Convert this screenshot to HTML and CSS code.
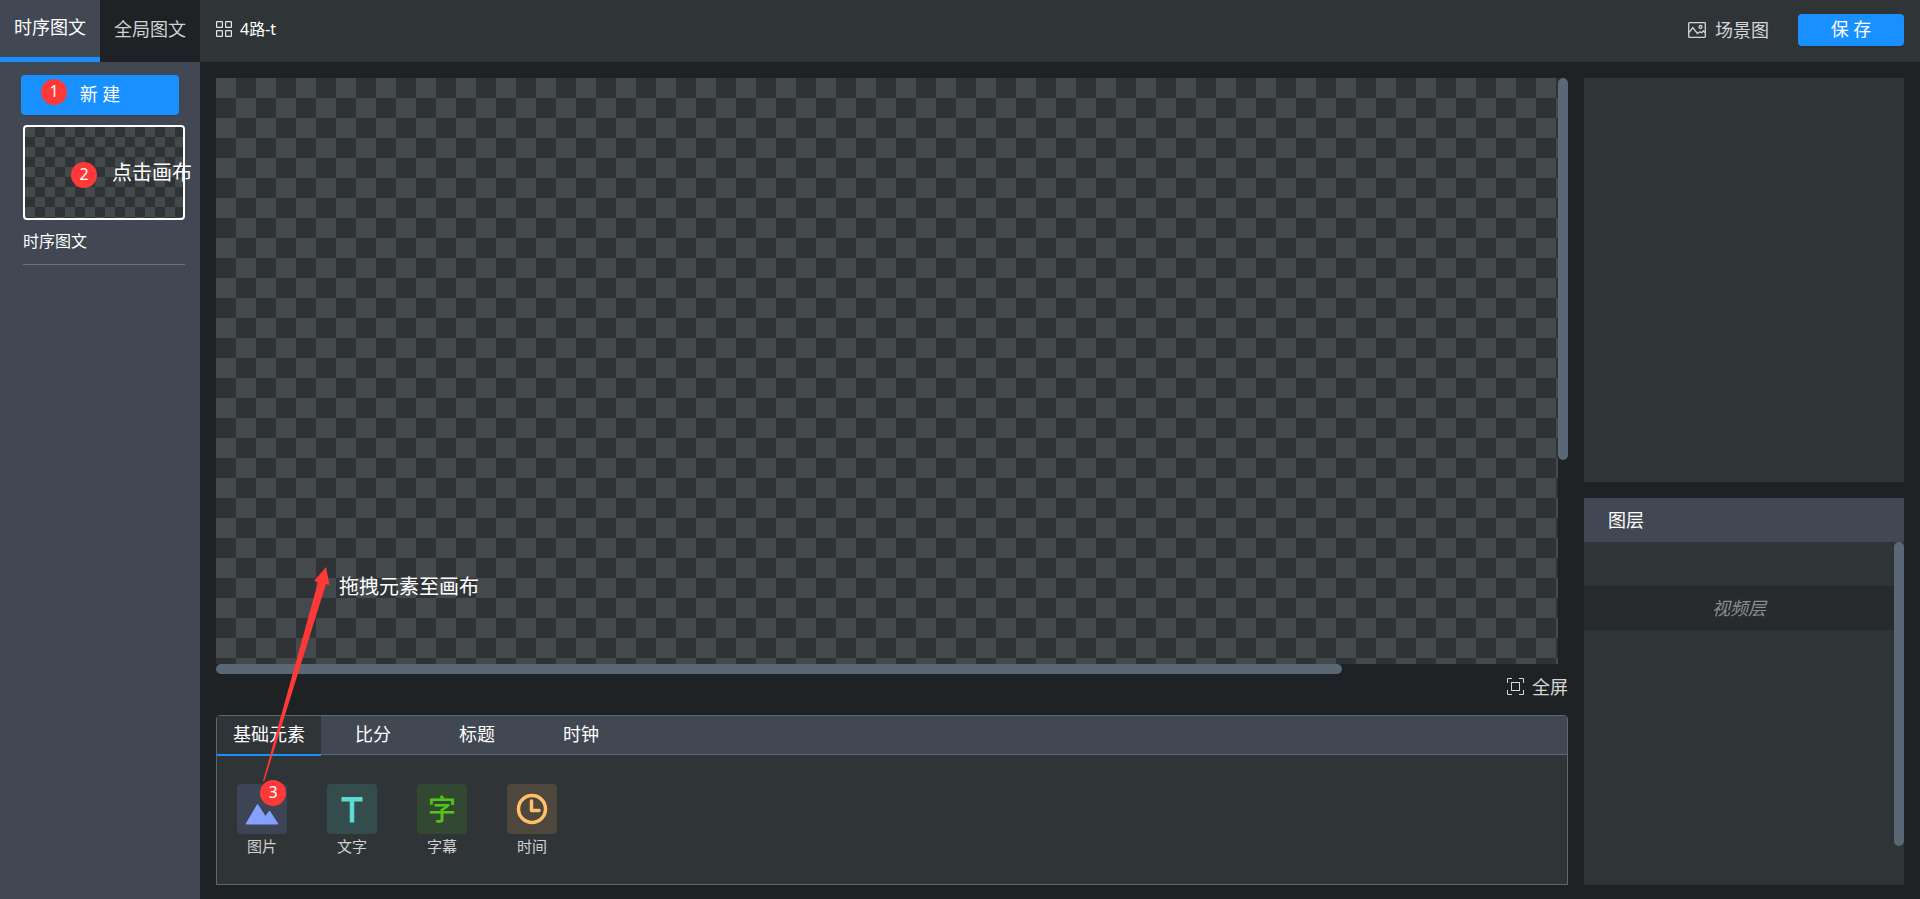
FILE: index.html
```html
<!DOCTYPE html>
<html lang="zh-CN">
<head>
<meta charset="utf-8">
<title>时序图文</title>
<link rel="stylesheet" href="styles.css">
</head>
<body>
<div class="app">
  <header class="header">
    <nav class="modes">
      <button class="mode mode-active" type="button">时序图文</button>
      <button class="mode" type="button">全局图文</button>
    </nav>
    <div class="title">
      <svg class="title-icon" viewBox="0 0 16 16" width="16" height="16" fill="none" stroke="currentColor" stroke-width="1.2">
        <rect x=".6" y=".6" width="5.800" height="5.800" rx=".5"/><rect x="9.600" y=".6" width="5.800" height="5.800" rx=".5"/>
        <rect x=".6" y="9.600" width="5.800" height="5.800" rx=".5"/><rect x="9.600" y="9.600" width="5.800" height="5.800" rx=".5"/>
      </svg>
      <h1 class="title-text">4路-t</h1>
    </div>
    <div class="actions">
      <button class="link-button scene" type="button">
        <svg viewBox="0 0 18 16" width="18" height="16" fill="none" stroke="currentColor" stroke-width="1.3">
          <rect x=".7" y=".7" width="16.6" height="14.6" rx=".5"/>
          <path d="M1 10.5 4.8 5.5 9.5 11.5 12 9.8 13.5 10.8 15.5 9 17 10.5"/>
          <circle cx="12.5" cy="5" r="1.5"/>
        </svg>
        <span>场景图</span>
      </button>
      <button class="primary save" type="button">保 存</button>
    </div>
  </header>

  <aside class="sidebar">
    <button class="primary create" type="button"><span class="badge badge-create">1</span>新 建</button>
    <div class="scene-item">
      <div class="thumb checker checker-small">
        <span class="badge badge-thumb">2</span>
        <span class="hint hint-thumb">点击画布</span>
      </div>
      <div class="scene-name">时序图文</div>
    </div>
  </aside>

  <main class="workspace">
    <div class="viewport">
      <div class="canvas checker"></div>
      <div class="track-y"><div class="thumb-y"></div></div>
      <div class="track-x"><div class="thumb-x"></div></div>
    </div>
    <div class="toolbar">
      <button class="link-button" type="button">
        <svg viewBox="0 0 17 17" width="17" height="17" fill="none" stroke="currentColor" stroke-width="1">
          <path d="M.5 5V.5H5M12 .5h4.500V5M16.500 12v4.500H12M5 16.500H.5V12"/>
          <rect x="4.500" y="4.500" width="8" height="8"/>
        </svg>
        <span>全屏</span>
      </button>
    </div>
    <section class="elements">
      <nav class="tabs">
        <button class="tab tab-active" type="button">基础元素</button>
        <button class="tab" type="button">比分</button>
        <button class="tab" type="button">标题</button>
        <button class="tab" type="button">时钟</button>
      </nav>
      <ul class="items">
        <li class="item">
          <span class="tile tile-image">
            <svg viewBox="0 0 50 50" width="50" height="50"><path d="M9 40 20.500 20.500 28.500 32.500 32.500 27 41 40Z" fill="#85a0ff" stroke="#85a0ff" stroke-width="1" stroke-linejoin="round"/></svg>
            <span class="badge badge-image">3</span>
          </span>
          <span>图片</span>
        </li>
        <li class="item">
          <span class="tile tile-text">
            <svg viewBox="0 0 50 50" width="50" height="50" fill="none" stroke="#5cdbd3"><path d="M14.500 15.300H35.500M25 15V38.500" stroke-width="4.500"/></svg>
          </span>
          <span>文字</span>
        </li>
        <li class="item">
          <span class="tile tile-caption">字</span>
          <span>字幕</span>
        </li>
        <li class="item">
          <span class="tile tile-time">
            <svg viewBox="0 0 50 50" width="50" height="50" fill="none" stroke="#ffc069"><circle cx="25" cy="25" r="13.500" stroke-width="3.500"/><path d="M24.500 17V26.500H32" stroke-width="3.500" stroke-linecap="round" stroke-linejoin="round"/></svg>
          </span>
          <span>时间</span>
        </li>
      </ul>
    </section>
    <div class="guide">
      <svg class="guide-arrow" viewBox="0 0 68 216" width="68" height="216"><path d="M63 0 51 14 55 15.300 0 214 1.200 214.500 63 17 66.500 18Z" fill="#ff3838"/></svg>
      <span class="hint hint-drag">拖拽元素至画布</span>
    </div>
  </main>

  <aside class="inspector">
    <section class="properties"></section>
    <section class="layers">
      <h2 class="layers-title">图层</h2>
      <div class="layers-body">
        <div class="layers-list">
          <div class="layer"></div>
          <div class="layer layer-video">视频层</div>
        </div>
        <div class="layers-track"><div class="layers-thumb"></div></div>
      </div>
    </section>
  </aside>
</div>
</body>
</html>
```
FILE: styles.css
```css
* {
  box-sizing: border-box;
}

body {
  margin: 0;
  background: #1e2224;
  color: #fff;
  font-family: "Noto Sans", "Noto Sans CJK SC", sans-serif;
  font-size: 18px;
  line-height: 24px;
}

button {
  margin: 0;
  padding: 0;
  border: 0;
  background: none;
  color: inherit;
  font: inherit;
  cursor: pointer;
}

svg {
  display: block;
}

.app {
  display: grid;
  grid-template-columns: 200px minmax(0, 1fr) 352px;
  grid-template-rows: 62px minmax(0, 1fr);
  height: 100vh;
}

.header {
  grid-column: 1 / -1;
  display: flex;
  background: #2f3437;
}

.modes {
  display: grid;
  grid-template-columns: 1fr 1fr;
  width: 200px;
}

.mode {
  padding-bottom: 4px;
  background: #1e2224;
  color: #d0d1d1;
}

.mode-active {
  border-bottom: 5px solid #1890ff;
  background: #414853;
  color: #fff;
}

.title {
  display: flex;
  align-items: center;
  gap: 8px;
  padding: 0 0 4px 16px;
}

.title-icon {
  color: #e4e5e5;
}

.title-text {
  margin: 0;
  font-size: 16px;
  font-weight: 400;
}

.actions {
  display: flex;
  align-items: center;
  gap: 29px;
  margin-left: auto;
  padding: 0 16px 2px 0;
}

.link-button {
  display: flex;
  align-items: center;
  gap: 8px;
  color: #d5d6d7;
}

.scene {
  gap: 9px;
}

.primary {
  padding-bottom: 2px;
  border-radius: 4px;
  background: #1890ff;
  box-shadow: 0 2px 0 rgba(0, 0, 0, 0.04);
}

.save {
  width: 106px;
  height: 32px;
}

.sidebar {
  background: #414853;
  padding: 13px 15px 0 21px;
}

.create {
  position: relative;
  display: block;
  width: 158px;
  height: 40px;
}

.scene-item {
  margin: 10px 0 0 2px;
  border-bottom: 1px solid #69707a;
}

.thumb {
  position: relative;
  height: 95px;
  border: 2px solid #fff;
  border-radius: 4px;
}

.scene-name {
  padding: 9px 0 11px;
  font-size: 16px;
}

.checker {
  background-image: conic-gradient(#2f3335 25%, #44494b 0 50%, #2f3335 0 75%, #44494b 0);
  background-size: 40px 40px;
}

.checker-small {
  background-size: 20px 20px;
}

.workspace {
  position: relative;
  display: flex;
  flex-direction: column;
  padding: 16px 0 14px 16px;
}

.viewport {
  flex: 1;
  display: grid;
  grid-template-columns: minmax(0, 1fr) 10px;
  grid-template-rows: minmax(0, 1fr) 10px;
}

.thumb-y,
.thumb-x,
.layers-thumb {
  border-radius: 5px;
  background: #5a6774;
}

.thumb-y {
  height: 65.2%;
}

.thumb-x {
  width: 83.9%;
  height: 10px;
}

.toolbar {
  display: flex;
  justify-content: flex-end;
  height: 41px;
}

.toolbar .link-button {
  height: 25px;
}

.elements {
  height: 170px;
  border: 1px solid #5a6774;
  border-radius: 4px 4px 0 0;
  background: #2f3437;
}

.tabs {
  display: flex;
  height: 39px;
  border-bottom: 1px solid #5a6774;
  background: #414853;
}

.tab {
  width: 104px;
  height: 38px;
  padding-bottom: 2px;
}

.tab-active {
  height: 40px;
  border-bottom: 2px solid #1890ff;
  background: #2f3437;
}

.items {
  display: flex;
  gap: 40px;
  margin: 0;
  padding: 29px 20px 0;
  list-style: none;
}

.item {
  display: flex;
  flex-direction: column;
  align-items: center;
  color: #d0d1d1;
  font-size: 15px;
}

.tile {
  position: relative;
  display: block;
  width: 50px;
  height: 50px;
  border-radius: 4px;
}

.tile-image {
  background: #3c4456;
}

.tile-text {
  background: #354c4d;
}

.tile-caption {
  background: #334833;
  color: #52c41a;
  font-size: 28px;
  font-weight: 500;
  line-height: 50px;
  text-align: center;
}

.tile-time {
  background: #4d473d;
}

.badge {
  position: absolute;
  width: 26px;
  height: 26px;
  border-radius: 50%;
  background: #ff3838;
  color: #fff;
  font-size: 16px;
  line-height: 24px;
  text-align: center;
}

.badge-create {
  top: 4px;
  left: 20px;
}

.badge-thumb {
  top: 35px;
  left: 46px;
}

.badge-image {
  top: -4px;
  left: 23px;
}

.hint {
  font-size: 20px;
  white-space: nowrap;
}

.hint-thumb {
  position: absolute;
  top: 34px;
  left: 87px;
}

.guide {
  position: absolute;
  bottom: 116px;
  left: 63px;
  display: flex;
  gap: 8px;
  pointer-events: none;
}

.hint-drag {
  padding-top: 8px;
}

.inspector {
  display: flex;
  flex-direction: column;
  gap: 16px;
  padding: 16px;
  padding-bottom: 14px;
}

.properties {
  flex: 404;
  background: #2f3437;
}

.layers {
  flex: 387;
  display: flex;
  flex-direction: column;
  background: #2f3437;
}

.layers-title {
  margin: 0;
  padding: 10px 24px;
  background: #414853;
  font-size: 18px;
  font-weight: 400;
}

.layers-body {
  flex: 1;
  display: grid;
  grid-template-columns: minmax(0, 1fr) 10px;
}

.layer {
  height: 44px;
}

.layer-video {
  background: #272b2d;
  color: #8b8d8e;
  font-style: italic;
  line-height: 44px;
  text-align: center;
}

.layers-thumb {
  height: 88.6%;
}
```
